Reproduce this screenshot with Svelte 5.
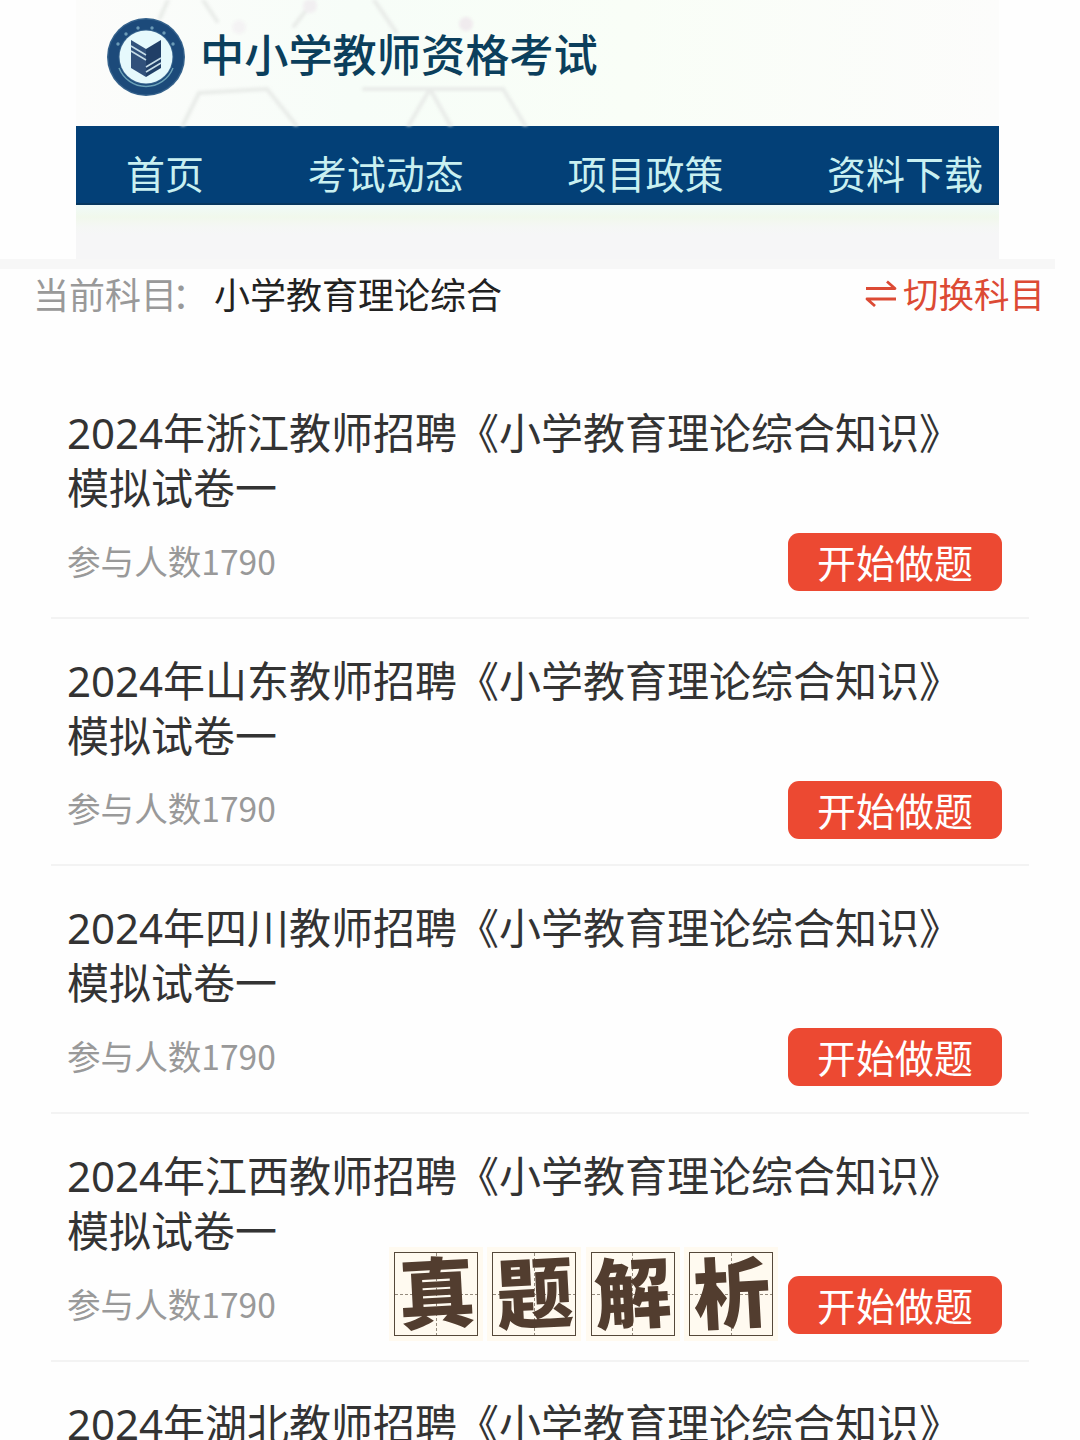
<script>
  const navItems = ['首页', '考试动态', '项目政策', '资料下载'];
  const subject = '小学教育理论综合';
  const stamps = ['真', '题', '解', '析'];

  const papers = ['浙江', '山东', '四川', '江西', '湖北'].map((province) => ({
    year: 2024,
    province,
    joined: 1790
  }));
</script>

<div class="page">
  <header class="top">
    <div class="banner">
      <div class="brand">
        <svg class="pattern" viewBox="0 0 923 126" fill="none" aria-hidden="true">
          <g stroke="#e9ece9" stroke-width="4" stroke-linecap="round">
            <path d="M84 18L92 0M127 0L141 21M218 26L238 0M298 0L320 32" />
            <path d="M107 125L123 93L191 89L220 125M288 89H427L452 130M354 89L330 130M354 89L377 130" />
          </g>
          <circle cx="390" cy="24" r="7" fill="#f0ebee" />
          <circle cx="163" cy="27" r="7" fill="#f4f3f4" />
          <circle cx="234" cy="6" r="7" fill="#f1eff1" />
        </svg>
        <svg class="logo" viewBox="0 0 80 80" aria-hidden="true">
          <circle cx="40" cy="40" r="39" fill="#35628c" />
          <circle cx="40" cy="40" r="32.500" fill="none" stroke="#1c4a7a" stroke-width="10" />
          <g fill="#8fbfd2" opacity="0.7">
            <circle cx="12" cy="27" r="1.700" />
            <circle cx="20" cy="17" r="1.700" />
            <circle cx="32" cy="11" r="1.700" />
            <circle cx="46" cy="11" r="1.700" />
            <circle cx="58" cy="16" r="1.700" />
            <circle cx="67" cy="27" r="1.700" />
          </g>
          <path d="M13 51a29 29 0 0 0 54 0" fill="none" stroke="#6ca2b8" stroke-width="1.500" />
          <circle cx="40" cy="40" r="26.500" fill="#e6f9fc" />
          <path d="M25 23l15 9v28l-15-9z" fill="#31517b" />
          <path d="M40 32l15-9v28l-15 9z" fill="#203f67" />
          <path d="M25 29l15 9M25 34l15 9M40 50l15-9M40 55l15-9" stroke="#c5dce7" stroke-width="1.600" />
        </svg>
        <span class="brand-name">中小学教师资格考试</span>
      </div>
      <nav class="nav">
        {#each navItems as item}
          <span>{item}</span>
        {/each}
      </nav>
      <div class="banner-foot"></div>
    </div>
    <div class="strip"></div>
  </header>

  <section class="subject">
    <span class="subject-label">当前科目<span class="colon">：</span></span>
    <span class="subject-name">{subject}</span>
    <span class="switch">
      <svg viewBox="0 0 32 28" aria-hidden="true">
        <path d="M1 9.500H30L22 2.500M31 20H2L10 27" fill="none" stroke="currentColor" stroke-width="2.800" stroke-linejoin="round" />
      </svg>
      切换科目
    </span>
  </section>

  <main class="list">
    {#each papers as paper}
      <article class="paper">
        <h2>{`${paper.year}年${paper.province}教师招聘《小学教育理论综合知识》模拟试卷一`}</h2>
        <div class="paper-foot">
          <span class="joined">参与人数{paper.joined}</span>
          <button>开始做题</button>
        </div>
      </article>
    {/each}
  </main>

  <div class="stamps">
    {#each stamps as char}
      <div class="stamp"><div class="cell"><span>{char}</span></div></div>
    {/each}
  </div>
</div>

<style>
  :global(body) {
    background: #fefefe;
  }

  .page {
    position: relative;
    width: 1080px;
    height: 1440px;
    overflow: hidden;
    background: #fefefe;
    font-family: 'Noto Sans CJK SC', sans-serif;
  }

  .top {
    height: 271px;
  }

  .banner {
    width: 923px;
    height: 259px;
    margin-left: 76px;
    background: #f6f6f7;
  }

  .brand {
    position: relative;
    display: flex;
    align-items: center;
    box-sizing: border-box;
    height: 126px;
    padding: 0 0 12px 30px;
    background: linear-gradient(90deg, #fcfcfb, #f7fdf8 30%, #f9fef7 60%, #fcfcfb);
  }

  .pattern {
    position: absolute;
    inset: 0;
    width: 923px;
    height: 126px;
    filter: blur(1.5px);
  }

  .logo {
    position: relative;
    width: 80px;
    height: 80px;
  }

  .brand-name {
    position: relative;
    margin: -9px 0 0 14px;
    color: #0b3f5c;
    font-size: 44.2px;
    font-weight: 500;
    line-height: 60px;
    white-space: nowrap;
  }

  .nav {
    display: flex;
    align-items: center;
    gap: 103.7px;
    box-sizing: border-box;
    height: 79px;
    padding: 14px 0 0 50px;
    background: #034077;
    border-bottom: 2px solid #07375f;
    color: #c9f0f1;
    font-size: 39px;
    line-height: 58px;
    white-space: nowrap;
  }

  .banner-foot {
    height: 54px;
    background: linear-gradient(#f0faf8, #f1f8ec 12px, #f5f7f5 22px, #f6f6f7 30px);
  }

  .strip {
    width: 1055px;
    height: 10px;
    background: #f7f7f7;
  }

  .subject {
    display: flex;
    align-items: center;
    box-sizing: border-box;
    height: 48px;
    padding: 0 35px 5px 33px;
    font-size: 36px;
    line-height: 48px;
    white-space: nowrap;
  }

  .subject-label {
    display: flex;
    color: #999;
  }

  .colon {
    margin: 0 6px 0 -5px;
  }

  .subject-name {
    color: #222;
  }

  .switch {
    display: flex;
    align-items: center;
    gap: 6px;
    margin-left: auto;
    color: #dc4a34;
    font-size: 35.5px;
  }

  .switch svg {
    width: 32px;
    height: 28px;
  }

  .list {
    margin: 52px 51px 0;
  }

  .paper {
    box-sizing: border-box;
    height: 247.7px;
    padding: 34px 27px 0 16px;
    border-bottom: 2px solid #f3f3f3;
  }

  h2 {
    width: 920px;
    margin: 0;
    color: #333;
    font-family: 'Noto Sans', 'Noto Sans CJK SC', sans-serif;
    font-size: 42px;
    font-weight: 400;
    line-height: 55px;
  }

  .paper-foot {
    display: flex;
    align-items: center;
    justify-content: space-between;
    height: 58px;
    margin-top: 18px;
  }

  .joined {
    padding-bottom: 4px;
    color: #999;
    font-size: 33.6px;
  }

  button {
    width: 214px;
    height: 58px;
    padding: 0 0 2px;
    border: none;
    border-radius: 11px;
    background: #ec4932;
    color: #fff;
    font-family: inherit;
    font-size: 39px;
    line-height: 56px;
  }

  /* floats over the list */
  .stamps {
    position: absolute;
    top: 1247px;
    left: 389px;
    display: flex;
    gap: 4.4px;
  }

  .stamp {
    padding: 5px;
    background: #fffaf0;
  }

  .cell {
    display: flex;
    align-items: center;
    justify-content: center;
    box-sizing: border-box;
    width: 84px;
    height: 84px;
    border: 1.5px solid #55483a;
    background:
      repeating-linear-gradient(90deg, #958b7d 0 3px, transparent 3px 5px) 0 50% / 100% 1px no-repeat,
      repeating-linear-gradient(#958b7d 0 3px, transparent 3px 5px) 50% 0 / 1px 100% no-repeat,
      #fffaf0;
  }

  .cell span {
    color: #523d2f;
    font-size: 77px;
    font-weight: 900;
    line-height: 82px;
    transform: translateY(-5px) rotate(-3deg);
  }
</style>
